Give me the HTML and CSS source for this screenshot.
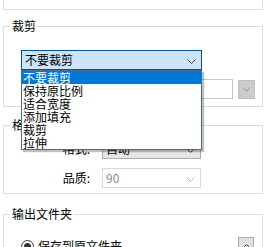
FILE: index.html
```html
<!DOCTYPE html>
<html>
<head>
<meta charset="utf-8">
<link rel="stylesheet" href="styles.css">
</head>
<body>
<div class="prev"></div>

<fieldset class="group crop">
  <legend>裁剪</legend>
  <div class="crop-body">
    <div class="combo open">
      <span class="combo-text">不要裁剪</span>
      <svg class="chev" width="9" height="5" viewBox="0 0 9 5"><path d="M0.5 0.5 L4.5 4.5 L8.5 0.5" fill="none" stroke="#444" stroke-width="1"/></svg>
      <ul class="list">
        <li class="sel">不要裁剪</li>
        <li>保持原比例</li>
        <li>适合宽度</li>
        <li>添加填充</li>
        <li>裁剪</li>
        <li>拉伸</li>
      </ul>
    </div>
    <div class="size-row">
      <div class="textbox"><span>100</span></div>
      <div class="btn-gray">
        <svg width="7" height="5" viewBox="0 0 7 5"><path d="M0.5 0.5 L3.5 4.5 L6.5 0.5" fill="none" stroke="#9a9a9a" stroke-width="1"/></svg>
      </div>
    </div>
  </div>
</fieldset>

<fieldset class="group format">
  <legend>格式</legend>
  <div class="form-grid">
    <span class="label">格式:</span>
    <div class="combo enabled"><span class="combo-text">自动</span>
      <svg class="chev" width="9" height="5" viewBox="0 0 9 5"><path d="M0.5 0.5 L4.5 4.5 L8.5 0.5" fill="none" stroke="#444" stroke-width="1"/></svg>
    </div>
    <span class="label">品质:</span>
    <div class="combo disabled"><span class="combo-text">90</span>
      <svg class="chev" width="9" height="5" viewBox="0 0 9 5"><path d="M0.5 0.5 L4.5 4.5 L8.5 0.5" fill="none" stroke="#b0b0b0" stroke-width="1"/></svg>
    </div>
  </div>
</fieldset>

<fieldset class="group output">
  <legend>输出文件夹</legend>
  <div class="out-row">
    <span class="radio"><span class="dot"></span></span>
    <span class="radio-label">保存到原文件夹</span>
    <span class="spacer"></span>
    <div class="btn-up">
      <svg width="9" height="5" viewBox="0 0 9 5"><path d="M0.5 4.5 L4.5 0.5 L8.5 4.5" fill="none" stroke="#444" stroke-width="1"/></svg>
    </div>
  </div>
</fieldset>
</body>
</html>
```

FILE: styles.css
```css
html, body {
  margin: 0;
  padding: 0;
  background: #ffffff;
}
body {
  font-family: "Noto Sans CJK SC", "Noto Sans", sans-serif;
  font-size: 12px;
  line-height: 14px;
  color: #000;
  padding: 0 4px 0 3px;
  width: 260px;
  overflow: hidden;
  height: 247px;
}
.prev {
  height: 9px;
  border: 1px solid #dcdcdc;
  border-top: none;
}
.group {
  margin: 0;
  padding: 0;
  min-width: 0;
  border: 1px solid #dcdcdc;
}
.group legend {
  margin-left: 6px;
  padding: 0 2px;
  line-height: 14px;
}
.crop { margin-top: 9px; }
.format { margin-top: 11px; }
.output { margin-top: 13px; height: 60px; }

.crop-body {
  padding: 17px 7px 7px 17px;
}
.combo {
  position: relative;
  box-sizing: border-box;
  height: 20px;
  display: flex;
  align-items: center;
  padding-left: 3px;
}
.combo .chev {
  position: absolute;
  right: 5px;
  top: 8px;
}
.combo.open {
  width: 181px;
  background: #cce4f7;
  border: 1px solid #005499;
}
.combo.enabled {
  background: #e5e5e5;
  border: 1px solid #adadad;
}
.combo.disabled {
  background: #ffffff;
  border: 1px solid #d9d9d9;
  color: #8a8a8a;
}
.list {
  position: absolute;
  left: -1px;
  top: 19px;
  width: 181px;
  box-sizing: border-box;
  margin: 0;
  padding: 0;
  list-style: none;
  background: #fff;
  border: 1px solid #3b6ea5;
  box-shadow: 2px 2px 1px rgba(0,0,0,0.25);
  z-index: 5;
}
.list li {
  height: 13px;
  line-height: 13px;
  padding-left: 1px;
  white-space: nowrap;
}
.list li.sel {
  background: #0078d7;
  color: #fff;
}
.size-row {
  display: flex;
  justify-content: flex-end;
  align-items: flex-start;
  margin-top: 9px;
  gap: 5px;
}
.textbox {
  box-sizing: border-box;
  width: 62px;
  height: 20px;
  border: 1px solid #c9c9c9;
  display: flex;
  align-items: center;
  padding-left: 10px;
  overflow: hidden;
}
.btn-gray {
  box-sizing: border-box;
  width: 17px;
  height: 19px;
  margin-top: 1px;
  background: #cccccc;
  border: 1px solid #c0c0c0;
  display: flex;
  align-items: center;
  justify-content: center;
}

.form-grid {
  display: grid;
  grid-template-columns: 86px 99px;
  column-gap: 12px;
  row-gap: 9px;
  align-items: center;
  padding: 7px 0 5px 0;
}
.label {
  text-align: right;
}

.out-row {
  display: flex;
  align-items: center;
  padding: 16px 8px 0 17px;
}
.radio {
  box-sizing: border-box;
  width: 13px;
  height: 13px;
  border: 1px solid #333;
  border-radius: 50%;
  display: flex;
  align-items: center;
  justify-content: center;
}
.dot {
  width: 7px;
  height: 7px;
  border-radius: 50%;
  background: #333;
}
.radio-label { margin-left: 4px; }
.spacer { flex: 1; }
.btn-up {
  box-sizing: border-box;
  width: 16px;
  height: 18px;
  background: #e1e1e1;
  border: 1px solid #adadad;
  display: flex;
  align-items: center;
  justify-content: center;
}
```
